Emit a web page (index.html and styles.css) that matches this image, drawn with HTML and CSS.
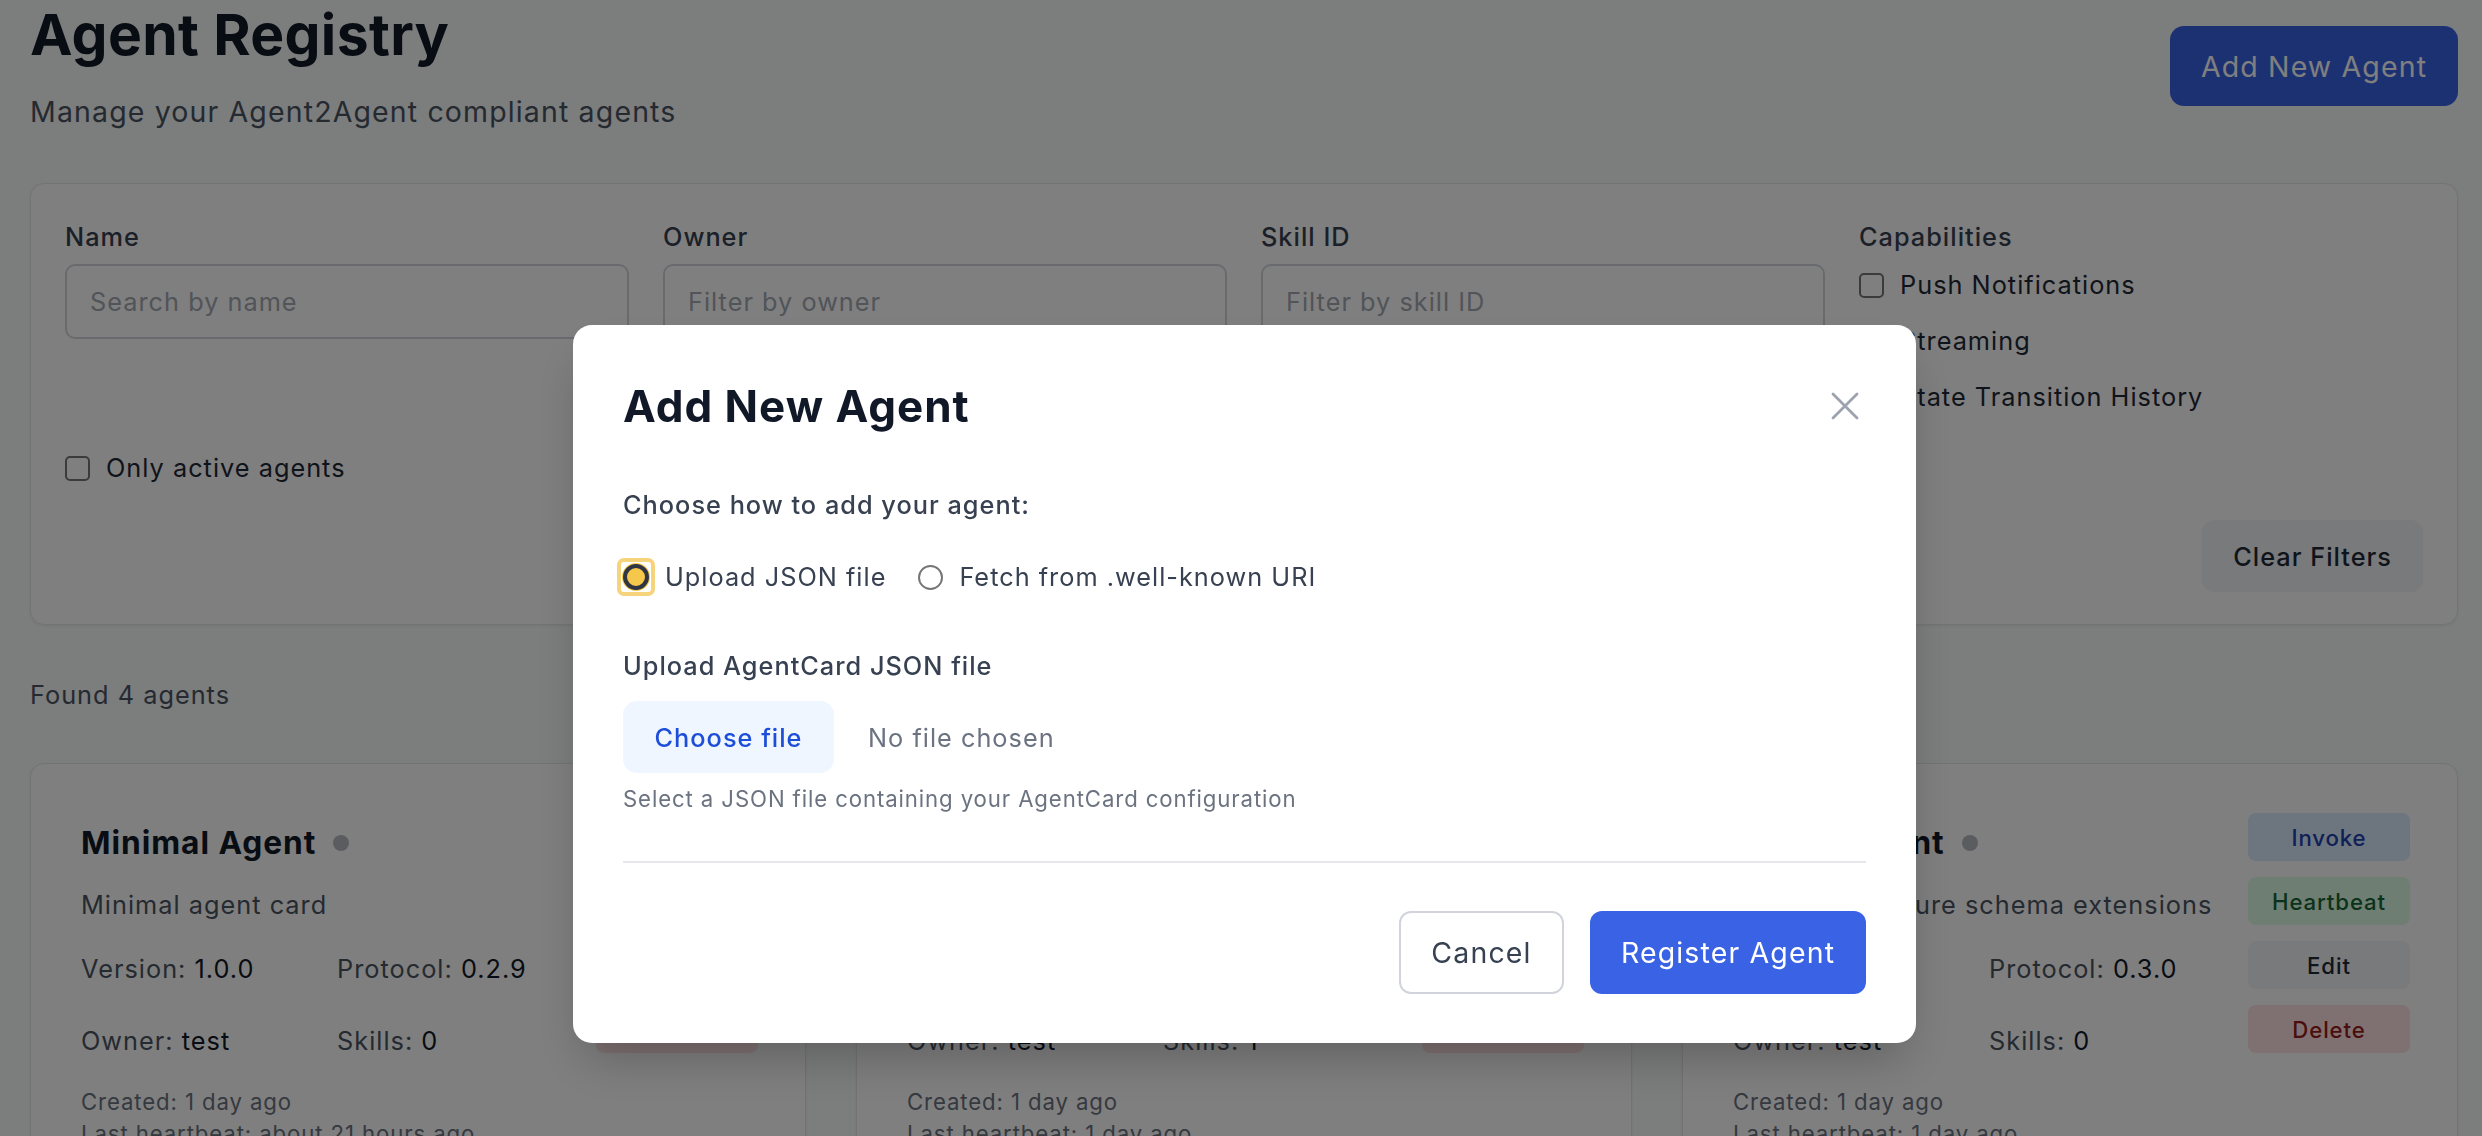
FILE: index.html
```html
<!DOCTYPE html>
<html lang="en">
<head>
<meta charset="utf-8">
<title>Agent Registry</title>
<link rel="stylesheet" href="styles.css">
</head>
<body>
<main class="page">
  <header class="header">
    <div class="header-text">
      <h1 class="title">Agent Registry</h1>
      <p class="subtitle">Manage your Agent2Agent compliant agents</p>
    </div>
    <button class="btn btn-primary btn-add" type="button">Add New Agent</button>
  </header>

  <section class="filters">
    <div class="filter-grid">
      <div class="field">
        <label class="field-label" for="f-name">Name</label>
        <input id="f-name" class="input" type="text" placeholder="Search by name">
      </div>
      <div class="field">
        <label class="field-label" for="f-owner">Owner</label>
        <input id="f-owner" class="input" type="text" placeholder="Filter by owner">
      </div>
      <div class="field">
        <label class="field-label" for="f-skill">Skill ID</label>
        <input id="f-skill" class="input" type="text" placeholder="Filter by skill ID">
      </div>
      <div class="field">
        <span class="field-label">Capabilities</span>
        <div class="cap-list">
          <label class="check"><span class="box"></span>Push Notifications</label>
          <label class="check"><span class="box"></span>Streaming</label>
          <label class="check"><span class="box"></span>State Transition History</label>
        </div>
      </div>
      <label class="check"><span class="box"></span>Only active agents</label>
    </div>
    <div class="filter-actions">
      <button class="btn btn-clear" type="button">Clear Filters</button>
    </div>
  </section>

  <p class="found">Found 4 agents</p>

  <div class="cards">
    <article class="card">
      <div class="card-info">
        <div class="card-title-row"><h3 class="card-title">Minimal Agent</h3><span class="dot"></span></div>
        <p class="card-desc">Minimal agent card</p>
        <div class="details">
          <div><span class="k">Version:</span> <span class="v">1.0.0</span></div>
          <div><span class="k">Protocol:</span> <span class="v">0.2.9</span></div>
          <div><span class="k">Owner:</span> <span class="v">test</span></div>
          <div><span class="k">Skills:</span> <span class="v">0</span></div>
        </div>
        <div class="meta">
          <p>Created: 1 day ago</p>
          <p>Last heartbeat: about 21 hours ago</p>
        </div>
      </div>
      <div class="actions">
        <button class="act act-invoke" type="button">Invoke</button>
        <button class="act act-beat" type="button">Heartbeat</button>
        <button class="act act-edit" type="button">Edit</button>
        <button class="act act-delete" type="button">Delete</button>
      </div>
    </article>

    <article class="card">
      <div class="card-info">
        <div class="card-title-row"><h3 class="card-title">Sample Agent</h3><span class="dot"></span></div>
        <p class="card-desc">Sample agent with one skill</p>
        <div class="details">
          <div><span class="k">Version:</span> <span class="v">1.0.0</span></div>
          <div><span class="k">Protocol:</span> <span class="v">0.3.0</span></div>
          <div><span class="k">Owner:</span> <span class="v">test</span></div>
          <div><span class="k">Skills:</span> <span class="v">1</span></div>
        </div>
        <div class="meta">
          <p>Created: 1 day ago</p>
          <p>Last heartbeat: 1 day ago</p>
        </div>
      </div>
      <div class="actions">
        <button class="act act-invoke" type="button">Invoke</button>
        <button class="act act-beat" type="button">Heartbeat</button>
        <button class="act act-edit" type="button">Edit</button>
        <button class="act act-delete" type="button">Delete</button>
      </div>
    </article>

    <article class="card">
      <div class="card-info">
        <div class="card-title-row"><h3 class="card-title">Future Agent</h3><span class="dot"></span></div>
        <p class="card-desc">Agent with future schema extensions</p>
        <div class="details">
          <div><span class="k">Version:</span> <span class="v">2.0.0</span></div>
          <div><span class="k">Protocol:</span> <span class="v">0.3.0</span></div>
          <div><span class="k">Owner:</span> <span class="v">test</span></div>
          <div><span class="k">Skills:</span> <span class="v">0</span></div>
        </div>
        <div class="meta">
          <p>Created: 1 day ago</p>
          <p>Last heartbeat: 1 day ago</p>
        </div>
      </div>
      <div class="actions">
        <button class="act act-invoke" type="button">Invoke</button>
        <button class="act act-beat" type="button">Heartbeat</button>
        <button class="act act-edit" type="button">Edit</button>
        <button class="act act-delete" type="button">Delete</button>
      </div>
    </article>
  </div>
</main>

<div class="overlay">
  <div class="modal" role="dialog" aria-labelledby="modal-title">
    <div class="modal-head">
      <h2 class="modal-title" id="modal-title">Add New Agent</h2>
      <button class="close" type="button" aria-label="Close">
        <svg viewBox="0 0 28 28" width="28" height="28" fill="none" stroke="#9ca3af" stroke-width="2.8" stroke-linecap="round"><path d="M2 2L26 26M26 2L2 26"/></svg>
      </button>
    </div>
    <p class="modal-q">Choose how to add your agent:</p>
    <div class="radios">
      <label class="radio-opt"><span class="focus-ring"><span class="radio radio-on"></span></span>Upload JSON file</label>
      <label class="radio-opt"><span class="radio"></span>Fetch from .well-known URI</label>
    </div>
    <p class="upload-label">Upload AgentCard JSON file</p>
    <div class="file-row">
      <span class="file-btn">Choose file</span>
      <span class="file-none">No file chosen</span>
    </div>
    <p class="helper">Select a JSON file containing your AgentCard configuration</p>
    <div class="modal-foot">
      <button class="btn btn-cancel" type="button">Cancel</button>
      <button class="btn btn-primary btn-register" type="button">Register Agent</button>
    </div>
  </div>
</div>
</body>
</html>
```

FILE: styles.css
```css
* { box-sizing: border-box; letter-spacing: 0.04em; }
html, body { margin: 0; padding: 0; }
body {
  background: #f9fafb;
  font-family: Inter, "Noto Sans", "DejaVu Sans", sans-serif;
  color: #111827;
  height: 1136px;
  overflow: hidden;
}

.page { width: 2428px; margin-left: 30px; padding-top: 3px; }

.header { display: flex; justify-content: space-between; align-items: flex-start; }
.title { margin: 0; font-size: 57px; line-height: 63px; font-weight: 700; color: #111827; letter-spacing: 0.006em; }
.subtitle { margin: 24px 0 0; font-size: 28.5px; line-height: 44px; color: #4b5563; }

.btn {
  font-family: inherit;
  border: 0;
  cursor: pointer;
  display: inline-flex;
  align-items: center;
  justify-content: center;
  padding: 0;
}
.btn-primary { background: #3962e4; color: #fff; }
.btn-add { margin-top: 23px; width: 288px; height: 80px; border-radius: 14px; font-size: 28.5px; font-weight: 400; }

.filters {
  margin-top: 49px;
  background: #fff;
  border: 1px solid #e5e7eb;
  border-radius: 14px;
  padding: 34px 34px 32px;
  box-shadow: 0 1px 3px rgba(0, 0, 0, 0.06);
}
.filter-grid { display: grid; grid-template-columns: repeat(4, 1fr); column-gap: 34px; row-gap: 33px; }
.field { display: flex; flex-direction: column; }
.field-label { font-size: 25.3px; line-height: 38px; font-weight: 500; color: #374151; }
.input {
  margin-top: 8px;
  height: 75px;
  width: 100%;
  border: 2px solid #d1d5db;
  border-radius: 10px;
  padding: 0 23px;
  font-family: inherit;
  font-size: 25.3px;
  color: #111827;
  background: #fff;
  outline: none;
}
.input::placeholder { color: #a3a8b1; }
.cap-list { margin-top: 10px; display: flex; flex-direction: column; gap: 18px; }
.check { display: flex; align-items: center; gap: 16px; font-size: 25.3px; line-height: 38px; color: #1f2937; }
.box { width: 25px; height: 25px; border: 2px solid #767676; border-radius: 5px; background: #fff; flex: none; }
.filter-actions { margin-top: 33px; display: flex; justify-content: flex-end; }
.btn-clear { height: 72px; padding: 0 31px; border-radius: 12px; background: #f3f4f6; color: #1f2937; font-size: 25.3px; font-weight: 500; }

.found { margin: 51px 0 0; font-size: 25.3px; line-height: 38px; color: #4b5563; }

.cards { margin-top: 49px; display: grid; grid-template-columns: repeat(3, 1fr); gap: 50px; }
.card {
  background: #fff;
  border: 1px solid #e5e7eb;
  border-radius: 14px;
  padding: 49px 47px 49px 50px;
  display: flex;
  gap: 24px;
  box-shadow: 0 1px 3px rgba(0, 0, 0, 0.06);
}
.card-info { flex: 1; min-width: 0; }
.card-title-row { margin-top: 8px; display: flex; align-items: center; gap: 17px; }
.card-title { margin: 0; font-size: 31.7px; line-height: 44px; font-weight: 700; color: #111827; white-space: nowrap; letter-spacing: 0.03em; }
.dot { width: 16px; height: 16px; border-radius: 50%; background: #b5b9c1; flex: none; }
.card-desc { margin: 21px 0 0; font-size: 25.3px; line-height: 38px; color: #4b5563; white-space: nowrap; }
.details { margin-top: 26px; display: grid; grid-template-columns: 256px 1fr; row-gap: 34px; font-size: 25.3px; line-height: 38px; }
.k { color: #4b5563; }
.v { color: #111827; }
.meta { margin-top: 26px; font-size: 22.2px; line-height: 31.7px; color: #6b7280; }
.meta p { margin: 0; white-space: nowrap; }
.actions { display: flex; flex-direction: column; gap: 16px; width: 162px; flex: none; }
.act { height: 48px; border: 0; border-radius: 8px; font-family: inherit; font-size: 22.2px; font-weight: 500; padding: 0; }
.act-invoke { background: #dbeafe; color: #1e40af; }
.act-beat { background: #dcfce7; color: #166534; }
.act-edit { background: #f3f4f6; color: #1f2937; }
.act-delete { background: #fee2e2; color: #991b1b; }

.overlay {
  position: fixed;
  inset: 0;
  background: rgba(0, 0, 0, 0.5);
  display: flex;
  justify-content: center;
  align-items: flex-start;
  padding-top: 325px;
  z-index: 10;
}
.modal {
  margin-left: 7px;
  width: 1343px;
  background: #fff;
  border-radius: 19px;
  padding: 50px 50px 49px;
  box-shadow: 0 25px 50px -12px rgba(0, 0, 0, 0.25);
}
.modal-head { display: flex; justify-content: space-between; align-items: center; height: 62px; }
.modal-title { margin: 0; font-size: 44px; line-height: 62px; font-weight: 700; color: #111827; letter-spacing: 0.022em; }
.close { background: none; border: 0; padding: 0; margin-right: 7px; width: 28px; height: 28px; display: flex; cursor: pointer; }
.modal-q { margin: 49px 0 0; font-size: 25.3px; line-height: 38px; font-weight: 500; color: #374151; }
.radios { margin-top: 34px; height: 38px; display: flex; align-items: center; gap: 32px; }
.radio-opt { display: inline-flex; align-items: center; gap: 16px; font-size: 25.3px; line-height: 38px; color: #374151; }
.focus-ring { display: inline-flex; padding: 2px; border: 4px solid #f6d47c; border-radius: 7px; margin: -6px; }
.radio { width: 25px; height: 25px; border-radius: 50%; border: 2px solid #767676; background: #fff; flex: none; }
.radio-on { width: 26px; height: 26px; border: 4px solid #2f3542; background: #f5c84c; box-shadow: 0 0 0 1px #f5c84c; }
.upload-label { margin: 51px 0 0; font-size: 25.3px; line-height: 38px; font-weight: 500; color: #374151; }
.file-row { margin-top: 16px; display: flex; align-items: center; }
.file-btn {
  width: 211px;
  height: 72px;
  display: inline-flex;
  align-items: center;
  justify-content: center;
  background: #eff6ff;
  color: #1d4ed8;
  border-radius: 14px;
  font-size: 25.3px;
  font-weight: 500;
}
.file-none { margin-left: 34px; font-size: 25.3px; color: #6b7280; }
.helper { margin: 10px 0 0; font-size: 22.2px; line-height: 32px; color: #6b7280; }
.modal-foot {
  margin-top: 46px;
  border-top: 2px solid #e5e7eb;
  padding-top: 48px;
  display: flex;
  justify-content: flex-end;
  gap: 26px;
}
.btn-cancel { width: 165px; height: 83px; border: 2px solid #d1d5db; background: #fff; border-radius: 12px; color: #374151; font-size: 28.5px; font-weight: 400; }
.btn-register { width: 276px; height: 83px; border-radius: 12px; font-size: 28.5px; font-weight: 400; }
```
